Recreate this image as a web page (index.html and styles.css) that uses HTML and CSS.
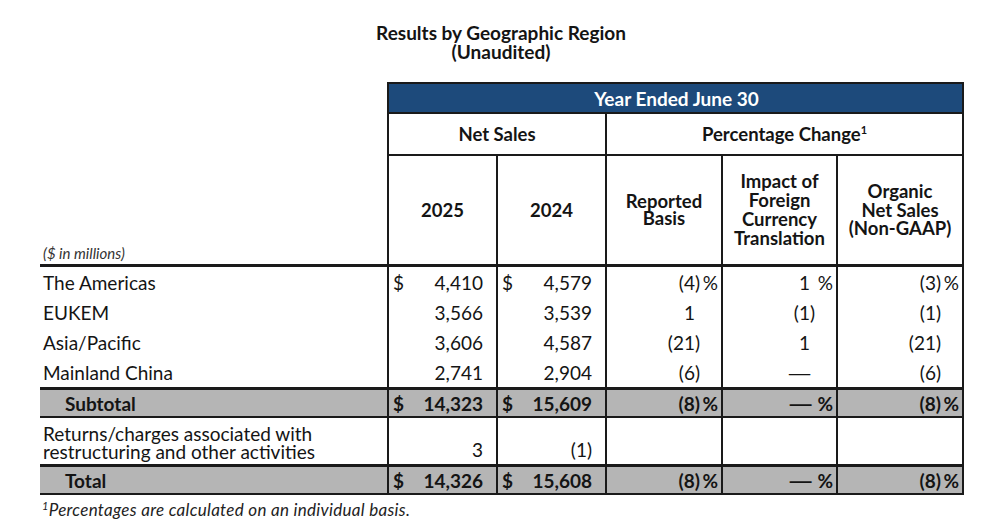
FILE: index.html
```html
<!DOCTYPE html>
<html>
<head>
<meta charset="utf-8">
<link rel="stylesheet" href="styles.css">
</head>
<body>
<div class="title">
  <div>Results by Geographic Region</div>
  <div>(Unaudited)</div>
</div>
<div class="wrap">
<table class="tbl">
  <colgroup>
    <col class="c-label"><col class="c-ns"><col class="c-ns"><col class="c-rep"><col class="c-imp"><col class="c-org">
  </colgroup>
  <thead>
    <tr class="r-year">
      <th class="blank"></th>
      <th class="blue" colspan="5">Year Ended June 30</th>
    </tr>
    <tr class="r-group">
      <th class="blank"></th>
      <th class="grp" colspan="2">Net Sales</th>
      <th class="grp" colspan="3">Percentage Change<sup>1</sup></th>
    </tr>
    <tr class="r-head">
      <th class="lbl-head"><span class="units">($ in millions)</span></th>
      <th class="hc">2025</th>
      <th class="hc">2024</th>
      <th class="hc tight">Reported<br>Basis</th>
      <th class="hc">Impact of<br>Foreign<br>Currency<br>Translation</th>
      <th class="hc mid">Organic<br>Net Sales<br>(Non-GAAP)</th>
    </tr>
  </thead>
  <tbody>
    <tr class="r-data">
      <td class="lbl">The Americas</td>
      <td><div class="money"><span>$</span><span>4,410</span></div></td>
      <td><div class="money"><span>$</span><span>4,579</span></div></td>
      <td class="pct">(4)<span class="pc">%</span></td>
      <td class="pct">1<span class="hang">)</span><span class="pc">%</span></td>
      <td class="pct">(3)<span class="pc">%</span></td>
    </tr>
    <tr class="r-data">
      <td class="lbl">EUKEM</td>
      <td><div class="money"><span></span><span>3,566</span></div></td>
      <td><div class="money"><span></span><span>3,539</span></div></td>
      <td class="pct">1<span class="hang">)</span><span class="pc"></span></td>
      <td class="pct">(1)<span class="pc"></span></td>
      <td class="pct">(1)<span class="pc"></span></td>
    </tr>
    <tr class="r-data">
      <td class="lbl">Asia/Pacific</td>
      <td><div class="money"><span></span><span>3,606</span></div></td>
      <td><div class="money"><span></span><span>4,587</span></div></td>
      <td class="pct">(21)<span class="pc"></span></td>
      <td class="pct">1<span class="hang">)</span><span class="pc"></span></td>
      <td class="pct">(21)<span class="pc"></span></td>
    </tr>
    <tr class="r-data">
      <td class="lbl">Mainland China</td>
      <td><div class="money"><span></span><span>2,741</span></div></td>
      <td><div class="money"><span></span><span>2,904</span></div></td>
      <td class="pct">(6)<span class="pc"></span></td>
      <td class="pct"><span class="dash">—</span><span class="hang">)</span><span class="pc"></span></td>
      <td class="pct">(6)<span class="pc"></span></td>
    </tr>
    <tr class="r-sum">
      <td class="lbl ind">Subtotal</td>
      <td><div class="money"><span>$</span><span>14,323</span></div></td>
      <td><div class="money"><span>$</span><span>15,609</span></div></td>
      <td class="pct">(8)<span class="pc">%</span></td>
      <td class="pct"><span class="dash wide">—</span><span class="pc">%</span></td>
      <td class="pct">(8)<span class="pc">%</span></td>
    </tr>
    <tr class="r-ret">
      <td class="lbl two">Returns/charges associated with<br>restructuring and other activities</td>
      <td class="bot"><div class="money"><span></span><span>3</span></div></td>
      <td class="bot"><div class="money"><span></span><span>(1)</span></div></td>
      <td></td>
      <td></td>
      <td></td>
    </tr>
    <tr class="r-sum">
      <td class="lbl ind">Total</td>
      <td><div class="money"><span>$</span><span>14,326</span></div></td>
      <td><div class="money"><span>$</span><span>15,608</span></div></td>
      <td class="pct">(8)<span class="pc">%</span></td>
      <td class="pct"><span class="dash wide">—</span><span class="pc">%</span></td>
      <td class="pct">(8)<span class="pc">%</span></td>
    </tr>
  </tbody>
</table>
<div class="foot"><sup>1</sup>Percentages are calculated on an individual basis.</div>
</div>
</body>
</html>
```
FILE: styles.css
```css
html, body {
  margin: 0;
  padding: 0;
  background: #fff;
}
body {
  font-family: Lato, "Open Sans", sans-serif;
  color: #141414;
}
.title {
  padding-top: 23px;
  text-align: center;
  font-weight: bold;
  font-size: 19px;
  line-height: 19px;
}
.wrap {
  padding: 21px 0 0 40px;
}
.tbl {
  border-collapse: collapse;
  table-layout: fixed;
  width: 923px;
}
.c-label { width: 348px; }
.c-ns { width: 109px; }
.c-rep { width: 116px; }
.c-imp { width: 115px; }
.c-org { width: 126px; }
.tbl th, .tbl td {
  padding: 0;
}
.blank {
  border: none;
}
.r-year th.blue {
  height: 28px;
  background: #1d4a7b;
  color: #fff;
  font-size: 19px;
  font-weight: bold;
  border: 2px solid #1a1a1a;
  text-align: center;
  padding-left: 2px;
}
.r-group th.grp {
  height: 40px;
  border: 2px solid #1a1a1a;
  font-size: 18.5px;
  font-weight: bold;
  text-align: center;
}
.grp sup {
  font-size: 11px;
  vertical-align: 7px;
  line-height: 0;
}
.r-head th {
  height: 108px;
  border: 2px solid #1a1a1a;
  border-bottom-width: 3px;
  font-size: 18.5px;
  font-weight: bold;
  line-height: 19px;
  text-align: center;
  vertical-align: middle;
}
.r-head th.tight {
  line-height: 17px;
}
.r-head th.mid {
  line-height: 18.5px;
}
.r-head th.lbl-head {
  border-top: none;
  border-left: none;
  text-align: left;
  vertical-align: bottom;
  padding: 0 0 1px 3px;
}
.units {
  font-size: 15px;
  font-style: italic;
  font-weight: normal;
  color: #333;
}
.tbl td {
  border-left: 2px solid #1a1a1a;
  border-right: 2px solid #1a1a1a;
  font-size: 19px;
  height: 30px;
  vertical-align: middle;
}
.tbl td.lbl {
  border-left: none;
  padding-left: 3px;
}
.money {
  display: flex;
  justify-content: space-between;
  padding: 0 13px 0 4px;
}
.pct {
  text-align: right;
  padding-right: 3px !important;
}
.pc {
  display: inline-block;
  width: 18px;
  text-align: right;
}
.hang {
  visibility: hidden;
}
.dash {
  display: inline-block;
  transform: scaleX(1.7);
  transform-origin: center;
  margin-right: 3px;
}
.dash.wide {
  margin-right: 7px;
}
.r-sum td {
  background: #b5b5b5;
  border-top: 3px solid #1a1a1a;
  border-bottom: 2px solid #1a1a1a;
  font-weight: bold;
  height: 26px;
}
.r-sum td.lbl.ind {
  padding-left: 25px;
}
.r-ret td {
  height: 43px;
  vertical-align: bottom;
  padding-bottom: 3px;
}
.r-ret td.lbl.two {
  line-height: 18px;
  padding-bottom: 3px;
}
.foot {
  font-size: 17px;
  font-style: italic;
  letter-spacing: 0.3px;
  padding: 4px 0 0 2px;
  color: #222;
}
.foot sup {
  font-size: 11px;
  vertical-align: 6px;
  line-height: 0;
}
```
